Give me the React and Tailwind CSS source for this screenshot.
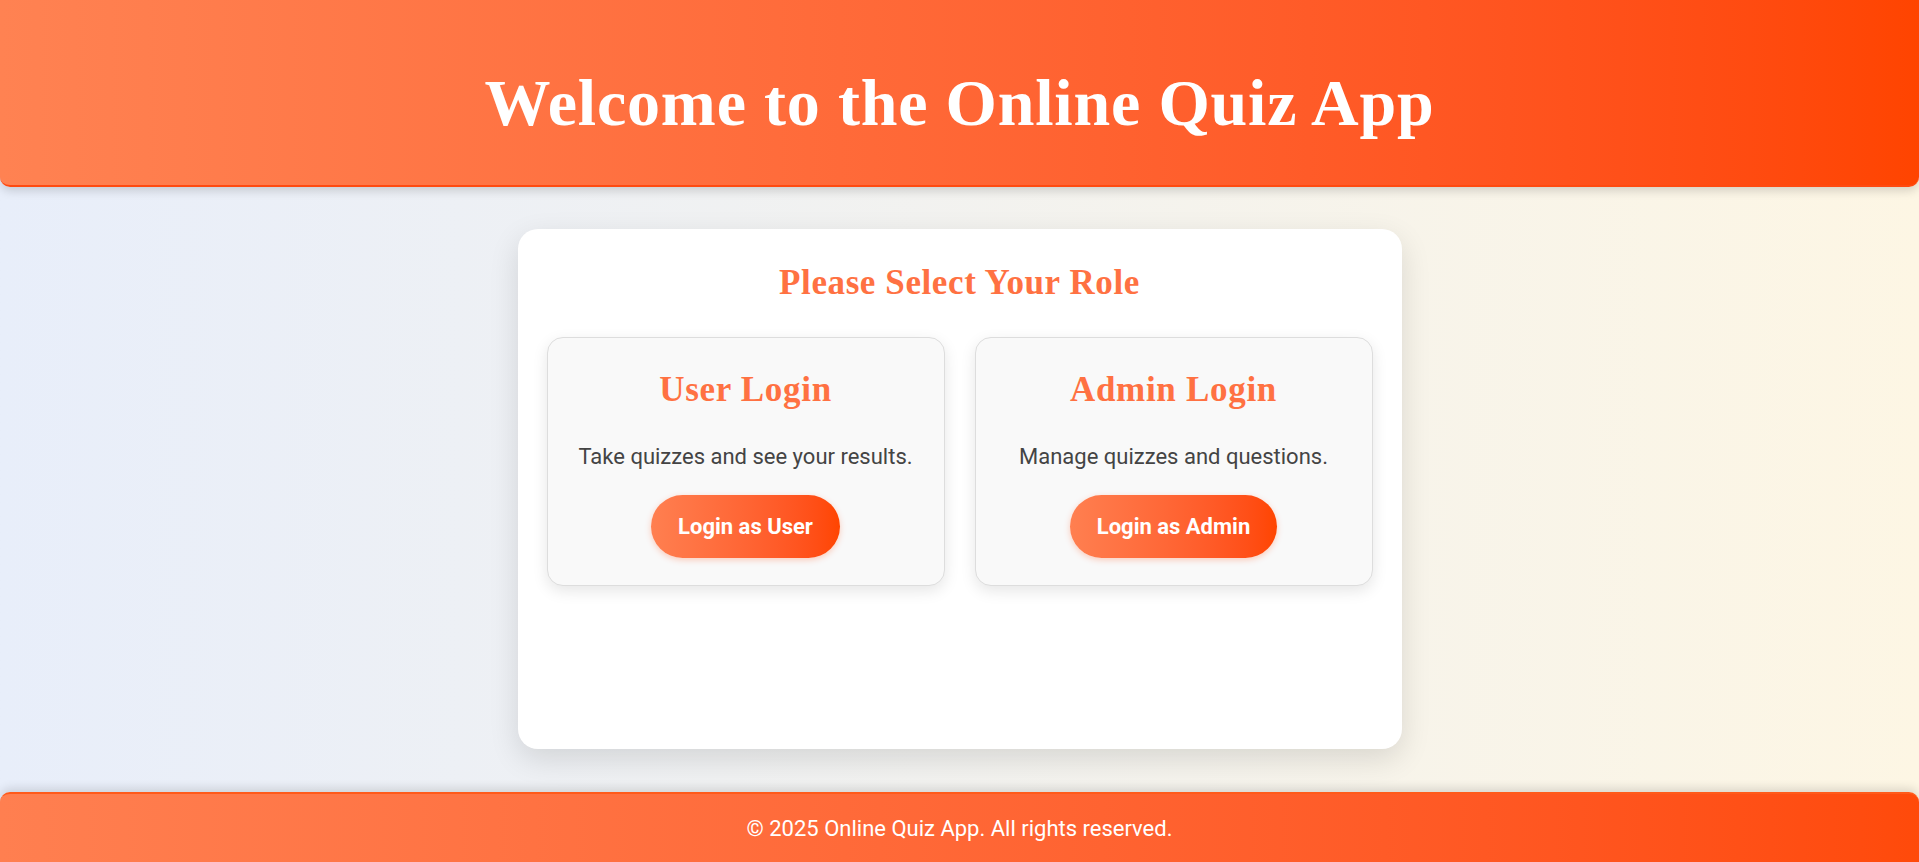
export default function App() {
  const serif = { fontFamily: '"Liberation Serif", "DejaVu Serif", serif' };
  return (
    <div
      className="min-h-screen flex flex-col bg-linear-to-r from-[#e8eefa] to-[#fdf6e4]"
      style={{ fontFamily: 'Roboto, "Liberation Sans", sans-serif' }}
    >
      <header className="h-[187px] shrink-0 flex items-center justify-center pt-[20px] bg-linear-to-r from-[#ff8252] to-[#ff4400] rounded-b-[10px] border-b-2 border-[#ff4a10] shadow-[0_4px_10px_rgba(0,0,0,0.15)]">
        <h1 className="text-white text-[66px] font-bold leading-[80px] tracking-[0.8px]" style={serif}>
          Welcome to the Online Quiz App
        </h1>
      </header>

      <main className="flex-1 flex justify-center pt-[42px] pb-[42px]">
        <div className="w-[884px] h-[520px] bg-white rounded-[20px] shadow-[0_10px_30px_rgba(0,0,0,0.12)] px-[29px] pt-[34px]">
          <h2 className="text-center text-[#ff7142] text-[35px] font-bold leading-[40px] tracking-[0.6px]" style={serif}>
            Please Select Your Role
          </h2>
          <div className="mt-[34px] grid grid-cols-2 gap-[30px]">
            {[
              { t: "User Login", d: "Take quizzes and see your results.", b: "Login as User" },
              { t: "Admin Login", d: "Manage quizzes and questions.", b: "Login as Admin" },
            ].map((c) => (
              <div
                key={c.t}
                className="h-[249px] bg-[#f9f9f9] border border-[#dddddd] rounded-[16px] shadow-[0_5px_15px_rgba(0,0,0,0.1)] flex flex-col items-center pt-[32px]"
              >
                <h3 className="text-[#ff7142] text-[35px] font-bold leading-[40px] tracking-[0.7px]" style={serif}>
                  {c.t}
                </h3>
                <p className="mt-[30px] text-[#444444] text-[22px] leading-[33px]">{c.d}</p>
                <button className="mt-[22px] h-[63px] px-[27px] rounded-full bg-linear-to-r from-[#ff7f50] to-[#ff4500] text-white font-bold text-[22px] shadow-[0_2px_6px_rgba(255,69,0,0.25)]">
                  {c.b}
                </button>
              </div>
            ))}
          </div>
        </div>
      </main>

      <footer className="h-[70px] shrink-0 flex items-center justify-center bg-linear-to-r from-[#ff7f50] to-[#ff4a0a] rounded-t-[10px] border-t-2 border-[#ff5a1a] shadow-[0_-4px_10px_rgba(0,0,0,0.12)]">
        <p className="text-white text-[22px]">© 2025 Online Quiz App. All rights reserved.</p>
      </footer>
    </div>
  );
}
